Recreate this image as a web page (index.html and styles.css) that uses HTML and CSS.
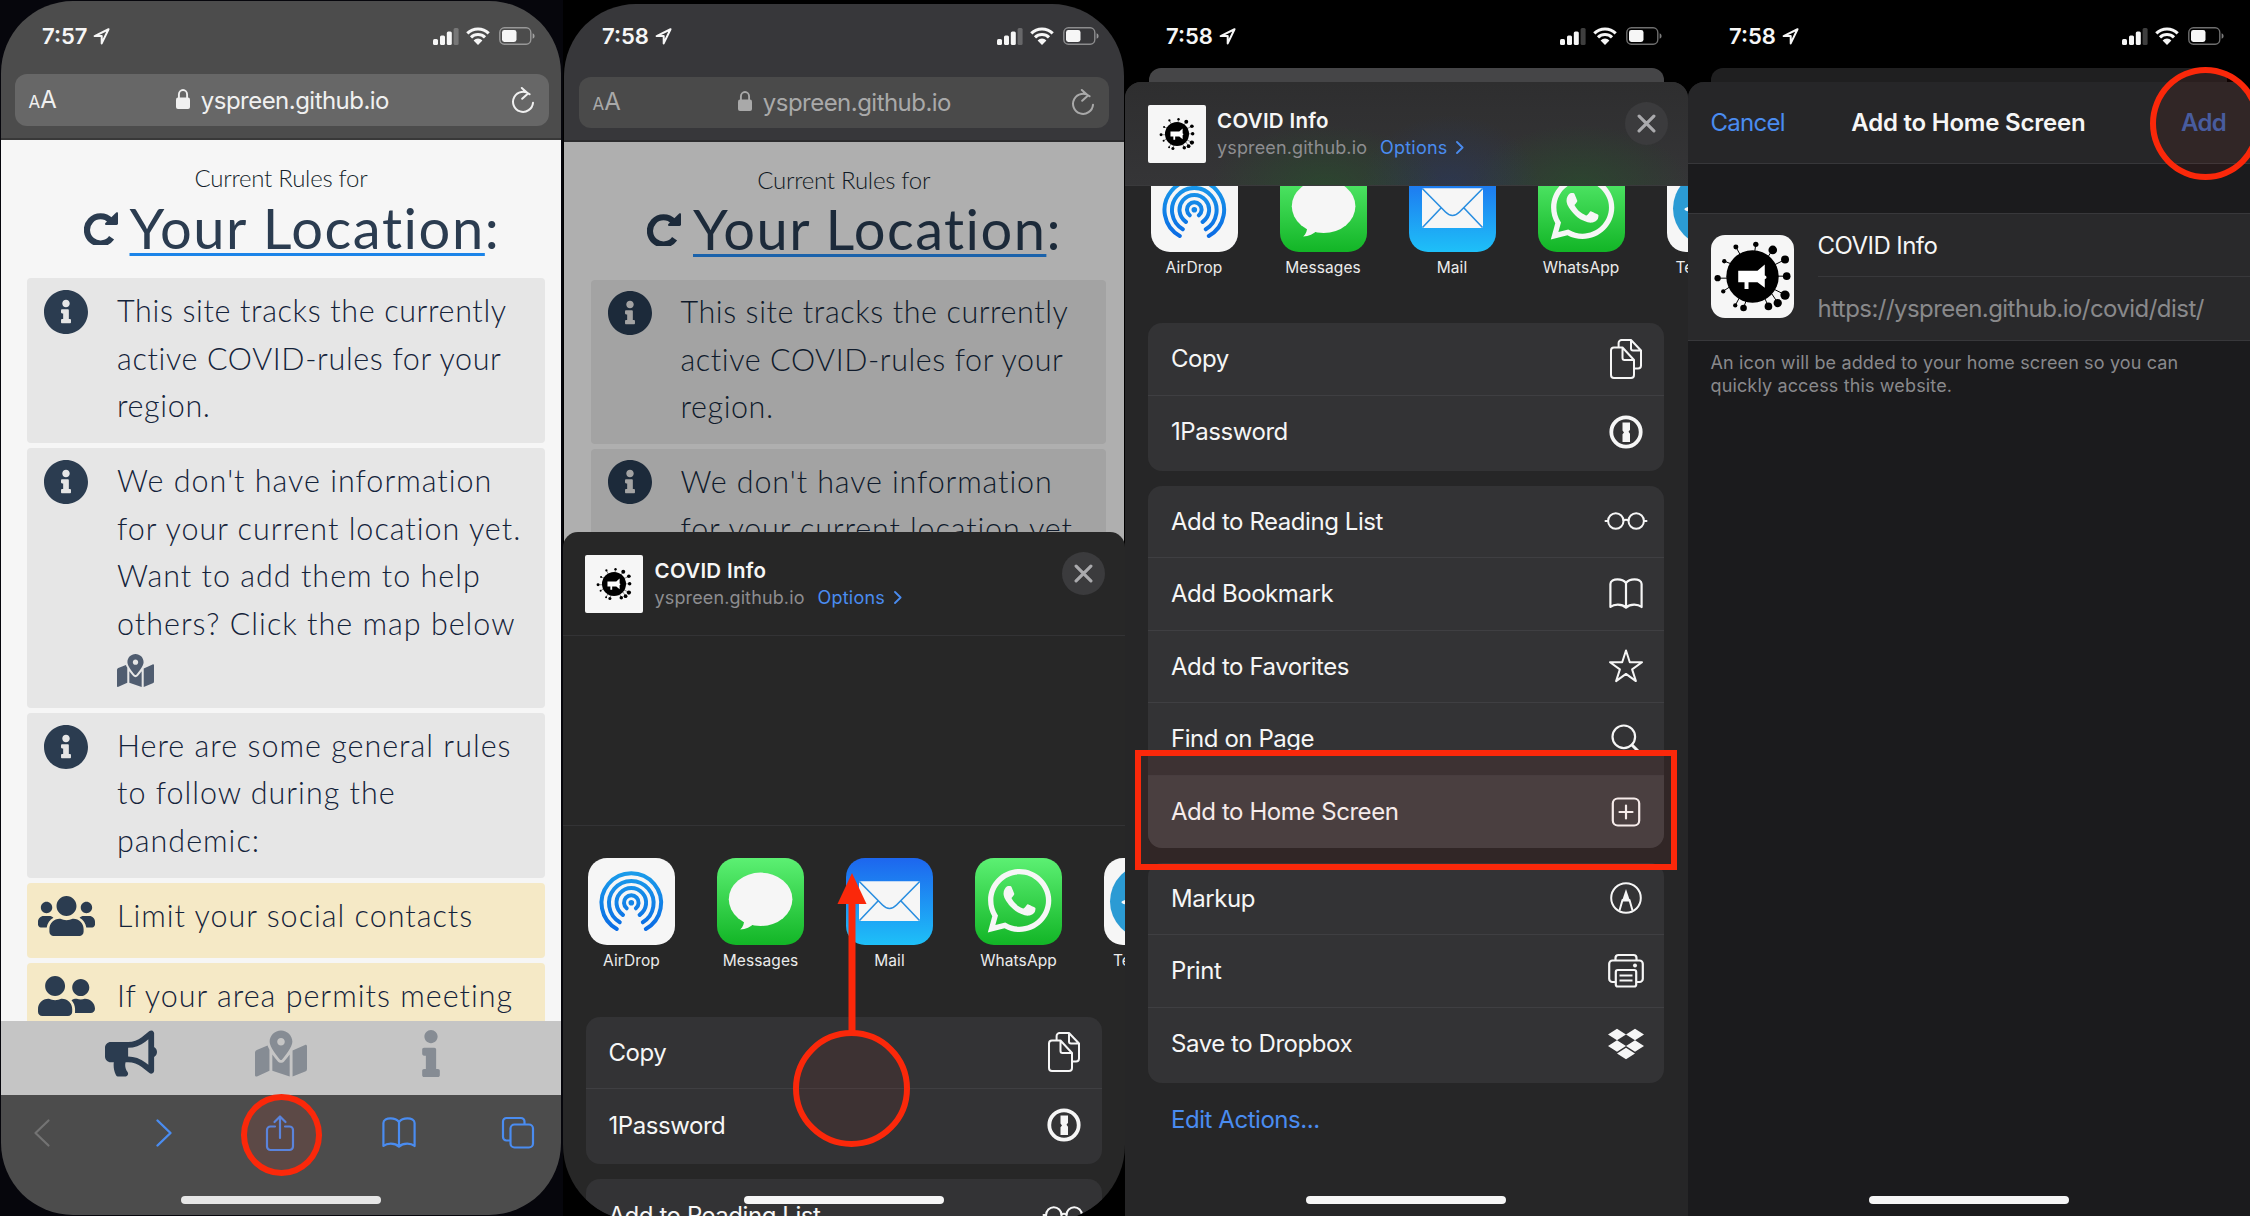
FILE: index.html
```
<!DOCTYPE html>
<html lang="en">
<head>
<meta charset="utf-8">
<title>COVID Info – Add to Home Screen</title>
<link rel="stylesheet" href="styles.css">
</head>
<body>
<svg class="defs" aria-hidden="true">
  <defs>
    <linearGradient id="g-blue" x1="0" y1="0" x2="0" y2="1"><stop offset="0" stop-color="#1a9bea"/><stop offset="1" stop-color="#0b6ce4"/></linearGradient>
    <symbol id="i-location" viewBox="0 0 16 16"><path d="M14.600 1.200 1.500 7.600h6.700v6.900z" fill="none" stroke="currentColor" stroke-width="1.900" stroke-linejoin="round"/></symbol>
    <symbol id="i-signal" viewBox="0 0 26 17"><rect x="0" y="11" width="5" height="6" rx="1.5"/><rect x="7" y="7.5" width="5" height="9.5" rx="1.5"/><rect x="13.8" y="3.5" width="5" height="13.5" rx="1.5"/><rect x="20.6" y="0" width="5" height="17" rx="1.5" opacity=".25"/></symbol>
    <symbol id="i-wifi" viewBox="0 0 24 18"><path d="M1.3 6.3a15.3 15.3 0 0 1 21.4 0M5 10.4a10 10 0 0 1 14 0" fill="none" stroke="currentColor" stroke-width="3.1"/><path d="M12 18 7.6 13.4a6.3 6.3 0 0 1 8.8 0z"/></symbol>
    <symbol id="i-battery" viewBox="0 0 36 18"><rect x=".8" y=".8" width="31" height="16.4" rx="4.6" fill="none" stroke="currentColor" stroke-width="1.4" opacity=".45"/><rect x="3" y="3" width="14.5" height="12" rx="2.4"/><path d="M33.6 6.2c2.6.8 2.6 4.800 0 5.600z" opacity=".5"/></symbol>
    <symbol id="i-lock" viewBox="0 0 14 20"><rect x="0" y="8.600" width="14" height="11.400" rx="2"/><path d="M2.900 9V5.400a4.100 4.400 0 0 1 8.200 0V9" fill="none" stroke="currentColor" stroke-width="1.900"/></symbol>
    <symbol id="i-reload" viewBox="0 0 24 27"><path d="M18.600 7.300A10 10 0 1 0 22 15.800M10.800 1l6.200 5.400-5.800 5.400" fill="none" stroke="currentColor" stroke-width="2" stroke-linecap="round" stroke-linejoin="round"/></symbol>
    <symbol id="i-redo" viewBox="0 0 34 34"><path d="M26.500 9.600A13.600 13.600 0 1 0 27.600 26.800" fill="none" stroke="currentColor" stroke-width="6.200"/><path d="M32.200 1.600c1-.9 1.800-.3 1.800.8v10.200c0 .8-.6 1.400-1.400 1.400H22.300c-1.200 0-1.700-1.300-.9-2.100z"/></symbol>
    <symbol id="i-info-circle" viewBox="8 8 496 496"><path d="M256 8C119.043 8 8 119.083 8 256c0 136.997 111.043 248 248 248s248-111.003 248-248C504 119.083 392.957 8 256 8zm0 110c23.196 0 42 18.804 42 42s-18.804 42-42 42-42-18.804-42-42 18.804-42 42-42zm56 254c0 6.627-5.373 12-12 12h-88c-6.627 0-12-5.373-12-12v-24c0-6.627 5.373-12 12-12h12v-64h-12c-6.627 0-12-5.373-12-12v-24c0-6.627 5.373-12 12-12h64c6.627 0 12 5.373 12 12v100h12c6.627 0 12 5.373 12 12v24z"/></symbol>
    <symbol id="i-map" viewBox="0 0 576 512"><path d="M288 0c-69.590 0-126 56.410-126 126 0 56.260 82.350 158.800 113.900 196.020 6.390 7.540 17.820 7.540 24.200 0C331.650 284.800 414 182.260 414 126 414 56.410 357.590 0 288 0zm0 168c-23.200 0-42-18.800-42-42s18.800-42 42-42 42 18.800 42 42-18.800 42-42 42zM20.120 215.950A32.006 32.006 0 0 0 0 245.660v250.320c0 11.320 11.430 19.060 21.940 14.860L160 448V214.920c-8.840-15.980-16.070-31.540-21.250-46.420L20.120 215.950zM288 359.670c-14.070 0-27.380-6.180-36.510-16.960-19.660-23.200-40.570-49.620-59.490-76.720v182l192 64V266c-18.920 27.090-39.820 53.520-59.490 76.720-9.130 10.770-22.440 16.950-36.510 16.950zm266.060-198.510L416 224v288l139.880-55.950A31.996 31.996 0 0 0 576 426.340V176.020c0-11.320-11.430-19.060-21.940-14.860z"/></symbol>
    <symbol id="i-info" viewBox="0 0 192 512"><path d="M20 424.229h20V279.771H20c-11.046 0-20-8.954-20-20V212c0-11.046 8.954-20 20-20h112c11.046 0 20 8.954 20 20v212.229h20c11.046 0 20 8.954 20 20V492c0 11.046-8.954 20-20 20H20c-11.046 0-20-8.954-20-20v-47.771c0-11.046 8.954-20 20-20zM96 0C56.235 0 24 32.235 24 72s32.235 72 72 72 72-32.235 72-72S135.764 0 96 0z"/></symbol>
    <symbol id="i-bullhorn" viewBox="0 0 576 512"><path d="M576 240c0-23.630-12.950-44.040-32-55.120V32.010C544 23.260 537.020 0 512 0c-7.120 0-14.190 2.380-19.980 7.020l-85.030 68.030C364.280 109.190 310.660 128 256 128H64c-35.350 0-64 28.650-64 64v96c0 35.350 28.650 64 64 64h33.700c-1.390 10.480-2.180 21.140-2.180 32 0 39.770 9.260 77.350 25.560 110.940 5.190 10.690 16.520 17.060 28.400 17.060h74.280c26.050 0 41.690-29.840 25.900-50.560-16.400-21.520-26.150-48.360-26.150-77.440 0-11.110 1.620-21.790 4.410-32H256c54.660 0 108.280 18.810 150.980 52.950l85.030 68.030a32.023 32.023 0 0 0 19.980 7.020c24.920 0 32-22.780 32-32V295.130C563.050 284.040 576 263.630 576 240zm-96 141.420l-33.050-26.440C392.950 311.780 325.120 288 256 288v-96c69.120 0 136.950-23.780 190.950-66.980L480 98.580v282.840z"/></symbol>
    <symbol id="i-users" viewBox="0 0 640 512"><path d="M96 224c35.300 0 64-28.700 64-64s-28.700-64-64-64-64 28.700-64 64 28.700 64 64 64zm448 0c35.300 0 64-28.700 64-64s-28.700-64-64-64-64 28.700-64 64 28.700 64 64 64zm32 32h-64c-17.600 0-33.500 7.100-45.100 18.600 40.300 22.100 68.900 62 75.100 109.400h66c17.700 0 32-14.300 32-32v-32c0-35.300-28.700-64-64-64zm-256 0c61.900 0 112-50.100 112-112S381.900 32 320 32 208 82.100 208 144s50.100 112 112 112zm76.800 32h-8.300c-20.800 10-43.900 16-68.500 16s-47.600-6-68.500-16h-8.300C179.600 288 128 339.600 128 403.200V432c0 26.500 21.500 48 48 48h288c26.500 0 48-21.500 48-48v-28.800c0-63.600-51.600-115.200-115.200-115.200zm-223.700-13.400C161.500 263.100 145.600 256 128 256H64c-35.300 0-64 28.700-64 64v32c0 17.700 14.300 32 32 32h65.900c6.300-47.400 34.900-87.300 75.200-109.400z"/></symbol>
    <symbol id="i-friends" viewBox="0 0 640 512"><path d="M192 256c61.900 0 112-50.100 112-112S253.900 32 192 32 80 82.100 80 144s50.100 112 112 112zm76.800 32h-8.300c-20.800 10-43.900 16-68.500 16s-47.600-6-68.500-16h-8.300C51.600 288 0 339.600 0 403.200V432c0 26.500 21.500 48 48 48h288c26.500 0 48-21.500 48-48v-28.800c0-63.600-51.600-115.200-115.200-115.200zM480 256c53 0 96-43 96-96s-43-96-96-96-96 43-96 96 43 96 96 96zm48 32h-3.800c-13.900 4.800-28.600 8-44.200 8s-30.300-3.200-44.200-8H432c-20.400 0-39.200 5.900-55.700 15.400 24.400 26.300 39.700 61.200 39.700 99.800v38.400c0 2.200-.5 4.300-.6 6.400H592c26.500 0 48-21.500 48-48 0-61.900-50.100-112-112-112z"/></symbol>
    <symbol id="i-back" viewBox="0 0 44 44"><path d="M28.500 9.500 15.500 22l13 12.500" fill="none" stroke="currentColor" stroke-width="2.200" stroke-linecap="round" stroke-linejoin="round"/></symbol>
    <symbol id="i-forward" viewBox="0 0 44 44"><path d="M15.500 9.500 28.500 22l-13 12.500" fill="none" stroke="currentColor" stroke-width="2.400" stroke-linecap="round" stroke-linejoin="round"/></symbol>
    <symbol id="i-share" viewBox="0 0 44 44"><path d="M17 15.500h-4.500a3.500 3.500 0 0 0-3.500 3.500v16.500a3.500 3.500 0 0 0 3.500 3.500h19a3.500 3.500 0 0 0 3.500-3.500V19a3.500 3.500 0 0 0-3.500-3.500H27M22 27V6M16.500 11 22 5.500l5.500 5.500" fill="none" stroke="currentColor" stroke-width="2.200" stroke-linecap="round" stroke-linejoin="round"/></symbol>
    <symbol id="i-book" viewBox="0 0 44 44"><path d="M22 11c-2-2.600-5-3.600-8.500-3.600S6.400 9 6.400 12v23c2-1.700 4.600-2.400 7.400-2.400 3.200 0 6.200 1 8.200 3 2-2 5-3 8.200-3 2.800 0 5.400.7 7.400 2.400V12c0-3-3.600-4.600-7.100-4.600S24 8.400 22 11zV35" fill="none" stroke="currentColor" stroke-width="2.200" stroke-linejoin="round"/></symbol>
    <symbol id="i-tabs" viewBox="0 0 44 44"><rect x="14.500" y="13.500" width="22.500" height="23" rx="4" fill="none" stroke="currentColor" stroke-width="2.200"/><path d="M14 29.500h-3.500a3.500 3.500 0 0 1-3.500-3.500V10.500A3.500 3.500 0 0 1 10.500 7H25a3.500 3.500 0 0 1 3.500 3.500v3" fill="none" stroke="currentColor" stroke-width="2.200"/></symbol>
    <symbol id="i-close" viewBox="0 0 18 18"><path d="M2 2l14 14M16 2 2 16" fill="none" stroke="currentColor" stroke-width="3" stroke-linecap="round"/></symbol>
    <symbol id="i-chevron" viewBox="0 0 8 13"><path d="M1 1l5.600 5.500L1 12" fill="none" stroke="currentColor" stroke-width="1.800" stroke-linecap="round" stroke-linejoin="round"/></symbol>
    <symbol id="i-copy" viewBox="0 0 44 44"><g fill="none" stroke="currentColor" stroke-width="2" stroke-linejoin="round"><path d="M30 31.500h4a3 3 0 0 0 3-3V13.500L27 3H17.600a3 3 0 0 0-3 3v4.500M27 3v8.500a2 2 0 0 0 2 2h8"/><path d="M7 13.500a3 3 0 0 1 3-3h8.500L30 23v15a3 3 0 0 1-3 3H10a3 3 0 0 1-3-3zM18.500 10.500v10.500a2 2 0 0 0 2 2H30"/></g></symbol>
    <symbol id="i-1password" viewBox="0 0 44 44"><circle cx="22" cy="22" r="14.700" fill="none" stroke="currentColor" stroke-width="3.800"/><path d="M18.500 12.500h7.500v7.300l-1.500 2 1.500 2v8.200h-7.500v-7.800l1.500-1.800-1.500-1.800z"/></symbol>
    <symbol id="i-glasses" viewBox="0 0 44 44"><g fill="none" stroke="currentColor" stroke-width="2" stroke-linecap="round"><circle cx="11.800" cy="22" r="7.700"/><circle cx="32.200" cy="22" r="7.700"/><path d="M19.500 21.300c1.500-.8 3.500-.8 5 0M1.500 22h2.500M40 22h2.500"/></g></symbol>
    <symbol id="i-star" viewBox="0 0 44 44"><path d="M22 6.500l3.800 11.700h12.200l-9.900 7.200 3.800 11.700-9.900-7.200-9.900 7.200 3.800-11.700-9.900-7.200h12.200z" fill="none" stroke="currentColor" stroke-width="2" stroke-linejoin="round"/></symbol>
    <symbol id="i-search" viewBox="0 0 44 44"><circle cx="19.800" cy="19.800" r="11.300" fill="none" stroke="currentColor" stroke-width="2.200"/><path d="M28 28l7.500 7.500" stroke="currentColor" stroke-width="3" stroke-linecap="round"/></symbol>
    <symbol id="i-plus" viewBox="0 0 44 44"><rect x="8.800" y="8.500" width="26.400" height="27" rx="5" fill="none" stroke="currentColor" stroke-width="2.200"/><path d="M22 15.500v13M15.500 22h13" stroke="currentColor" stroke-width="2.200" stroke-linecap="round"/></symbol>
    <symbol id="i-markup" viewBox="0 0 44 44"><g fill="none" stroke="currentColor" stroke-width="2"><circle cx="22" cy="22" r="14.800"/><path d="M15.500 34.500l3-10.500h7l3 10.500" stroke-linejoin="round"/></g><path d="M22 13l4.200 12.500h-8.400z"/></symbol>
    <symbol id="i-print" viewBox="0 0 44 44"><g fill="none" stroke="currentColor" stroke-width="2.200" stroke-linejoin="round"><path d="M12 33H8.500A3.300 3.300 0 0 1 5.200 29.700V14.800A3.300 3.300 0 0 1 8.500 11.500h27a3.300 3.300 0 0 1 3.300 3.300v14.900A3.300 3.300 0 0 1 35.500 33H32"/><path d="M11.500 11.500V9a3 3 0 0 1 3-3h15a3 3 0 0 1 3 3v2.500"/><rect x="11.800" y="21" width="20.400" height="16.500" rx="2"/><path d="M15.500 26.500h13M15.500 31.500h13" stroke-width="2"/></g><circle cx="31" cy="16.500" r="2"/></symbol>
    <symbol id="i-dropbox" viewBox="0 0 44 44"><path d="M13 6.800l9 5.700-9 5.700-9-5.700zM31 6.800l9 5.700-9 5.700-9-5.700zM13 18.300l9 5.700-9 5.700L4 24zM31 18.300l9 5.700-9 5.700-9-5.700zM22 25.800l9 5.700-9 5.700-9-5.700z"/></symbol>
    <symbol id="i-virus" viewBox="17 14 250 250">
      <g stroke="#000" stroke-width="3"><path d="M92 50l20 36M152 42l-6 40M202 58l-30 50M240 88l-60 30M245 138h-60M57 93l40 15M37 144h50M54 183l40-26M90 226l25-46M115 233l15-40M190 229l-20-44M218 218l-40-60M240 194l-60-30"/></g>
      <circle cx="142" cy="139" r="79"/>
      <circle cx="92" cy="50" r="7.500"/><circle cx="152" cy="42" r="8"/><circle cx="203" cy="59" r="13"/><circle cx="240" cy="88" r="12"/><circle cx="245" cy="138" r="11.500"/><circle cx="240" cy="195" r="14"/><circle cx="218" cy="219" r="12.500"/><circle cx="190" cy="229" r="11.500"/><circle cx="115" cy="234" r="10"/><circle cx="90" cy="226" r="6.500"/><circle cx="54" cy="184" r="6.500"/><circle cx="37" cy="144" r="9.500"/><circle cx="57" cy="93" r="6.500"/>
      <path d="M99 122h58l22-19v33c7 2 7 9 0 11v26l-22-17h-27v21h-12v-21H99z" fill="#fff"/>
    </symbol>
    <symbol id="a-airdrop" viewBox="0 0 87 87"><g fill="none" stroke="url(#g-blue)" stroke-width="4" stroke-linecap="round"><path d="M28.800 71a29.800 29.800 0 1 1 29 0M31.800 64.300a22.300 22.300 0 1 1 23 0M35 57a14.800 14.800 0 1 1 16.600 0M38.700 50.300a7.300 7.300 0 1 1 9.200 0"/></g><circle cx="43.300" cy="44.700" r="2.800" fill="#1285e8"/></symbol>
    <symbol id="a-messages" viewBox="0 0 87 87"><ellipse cx="43.600" cy="41.300" rx="31.800" ry="26.700" fill="#f6f6f6"/><path d="M27 61c.5 4.500-1 8-3.800 10.600 5.500-.4 10.500-2.400 14.300-6.600z" fill="#f6f6f6"/></symbol>
    <symbol id="a-mail" viewBox="0 0 87 87"><rect x="13" y="23.300" width="61" height="39.700" rx="1.500" fill="#f6f6f6"/><path d="M13.500 23.800l23 23.200c4.500 4.600 9.500 4.600 14 0l23-23.200M13.500 62.500l18.500-19.500M73.500 62.500L55 43" fill="none" stroke="#2a8ee0" stroke-width="1.600"/></symbol>
    <symbol id="a-whatsapp" viewBox="0 0 87 87"><path transform="translate(12.800 6.500) scale(.1417)" fill="#f6f6f6" d="M380.900 97.100C339 55.100 283.200 32 223.900 32c-122.400 0-222 99.600-222 222 0 39.100 10.200 77.300 29.600 111L0 480l117.700-30.900c32.400 17.700 68.900 27 106.100 27h.1c122.300 0 224.100-99.600 224.100-222 0-59.300-25.200-115-67.100-157zm-157 341.600c-33.200 0-65.700-8.900-94-25.700l-6.700-4-69.800 18.300L72 359.200l-4.400-7c-18.500-29.400-28.200-63.300-28.200-98.200 0-101.700 82.800-184.500 184.600-184.500 49.300 0 95.600 19.200 130.400 54.100 34.800 34.900 56.200 81.200 56.100 130.500 0 101.800-84.900 184.600-186.600 184.600zm101.200-138.200c-5.500-2.800-32.800-16.200-37.900-18-5.100-1.900-8.800-2.800-12.500 2.800-3.700 5.600-14.300 18-17.600 21.800-3.200 3.700-6.500 4.200-12 1.400-32.600-16.300-54-29.100-75.500-66-5.700-9.800 5.700-9.100 16.300-30.300 1.800-3.700.9-6.900-.5-9.700-1.400-2.800-12.500-30.100-17.100-41.200-4.500-10.800-9.100-9.300-12.500-9.500-3.200-.2-6.900-.2-10.600-.2-3.700 0-9.700 1.400-14.800 6.900-5.100 5.600-19.400 19-19.400 46.300 0 27.300 19.900 53.700 22.600 57.400 2.800 3.700 39.100 59.700 94.800 83.800 35.200 15.200 49 16.500 66.600 13.900 10.700-1.600 32.800-13.400 37.400-26.400 4.600-13 4.600-24.100 3.200-26.400-1.300-2.500-5-3.900-10.500-6.600z"/></symbol>
    <symbol id="a-telegram" viewBox="0 0 87 87"><circle cx="43.500" cy="43.500" r="37.500" fill="#2b9bd4"/><path d="M18.500 43l44-18c2-.7 3.800.5 3.100 3.800l-7.500 35c-.5 2.500-2 3-4.100 2L42.600 57.500l-5.600 5.400c-1.500 1.200-2 0-2.300-1.300L31 49.500l-11.500-3.600c-2.500-.8-2.500-2-1-2.900z" fill="#f6f6f6"/></symbol>
  </defs>
</svg>

<main class="board">

  <!-- Step 1: open the share menu -->
  <section class="phone phone-browser">
    <div class="screen">
      <header class="browser-head">
        <div class="status"><span class="time">7:57</span><svg class="loc"><use href="#i-location"/></svg><span class="spacer"></span><svg class="signal"><use href="#i-signal"/></svg><svg class="wifi"><use href="#i-wifi"/></svg><svg class="battery"><use href="#i-battery"/></svg></div>
        <div class="urlbar"><span class="aa"><small>A</small>A</span><span class="host"><svg class="lock"><use href="#i-lock"/></svg>yspreen.github.io</span><svg class="reload"><use href="#i-reload"/></svg></div>
      </header>
      <div class="page">
        <p class="kicker">Current Rules for</p>
        <h1 class="place"><svg class="redo"><use href="#i-redo"/></svg><span><u>Your Location</u>:</span></h1>
        <ul class="cards">
          <li class="card"><svg class="ic"><use href="#i-info-circle"/></svg><p class="narrow">This site tracks the currently<br>active COVID-rules for your<br>region.</p></li>
          <li class="card tall"><svg class="ic"><use href="#i-info-circle"/></svg><p>We don't have information<br>for your current location yet.<br>Want to add them to help<br>others? Click the map below<br><svg class="inline-map"><use href="#i-map"/></svg></p></li>
          <li class="card"><svg class="ic"><use href="#i-info-circle"/></svg><p>Here are some general rules<br>to follow during the<br>pandemic:</p></li>
          <li class="card warn"><svg class="ic wide"><use href="#i-users"/></svg><p>Limit your social contacts</p></li>
          <li class="card warn"><svg class="ic wide"><use href="#i-friends"/></svg><p>If your area permits meeting</p></li>
        </ul>
      </div>
      <nav class="sitenav"><svg class="n-horn"><use href="#i-bullhorn"/></svg><svg class="n-map"><use href="#i-map"/></svg><svg class="n-info"><use href="#i-info"/></svg></nav>
      <footer class="toolbar"><svg class="off"><use href="#i-back"/></svg><svg class="fwd"><use href="#i-forward"/></svg><svg><use href="#i-share"/></svg><svg><use href="#i-book"/></svg><svg><use href="#i-tabs"/></svg></footer>
    </div>
    <span class="home"></span>
    <span class="ring ring-share"></span>
  </section>

  <!-- Step 2: scroll the share sheet -->
  <section class="phone phone-share">
    <div class="screen dimmed">
      <header class="browser-head">
        <div class="status"><span class="time">7:58</span><svg class="loc"><use href="#i-location"/></svg><span class="spacer"></span><svg class="signal"><use href="#i-signal"/></svg><svg class="wifi"><use href="#i-wifi"/></svg><svg class="battery"><use href="#i-battery"/></svg></div>
        <div class="urlbar"><span class="aa"><small>A</small>A</span><span class="host"><svg class="lock"><use href="#i-lock"/></svg>yspreen.github.io</span><svg class="reload"><use href="#i-reload"/></svg></div>
      </header>
      <div class="page">
        <p class="kicker">Current Rules for</p>
        <h1 class="place"><svg class="redo"><use href="#i-redo"/></svg><span><u>Your Location</u>:</span></h1>
        <ul class="cards">
          <li class="card"><svg class="ic"><use href="#i-info-circle"/></svg><p class="narrow">This site tracks the currently<br>active COVID-rules for your<br>region.</p></li>
          <li class="card"><svg class="ic"><use href="#i-info-circle"/></svg><p>We don't have information<br>for your current location yet.</p></li>
        </ul>
      </div>
    </div>
    <div class="sheet">
      <header class="sheet-head"><span class="thumb"><svg><use href="#i-virus"/></svg></span><div class="meta"><strong>COVID Info</strong><p>yspreen.github.io<a>Options<svg><use href="#i-chevron"/></svg></a></p></div><span class="close"><svg><use href="#i-close"/></svg></span></header>
      <div class="people"></div>
      <div class="apps">
        <div class="app"><svg class="t-white"><use href="#a-airdrop"/></svg><span>AirDrop</span></div>
        <div class="app"><svg class="t-green"><use href="#a-messages"/></svg><span>Messages</span></div>
        <div class="app"><svg class="t-blue"><use href="#a-mail"/></svg><span>Mail</span></div>
        <div class="app"><svg class="t-green"><use href="#a-whatsapp"/></svg><span>WhatsApp</span></div>
        <div class="app"><svg class="t-white"><use href="#a-telegram"/></svg><span>Telegram</span></div>
      </div>
      <ul class="actions">
        <li>Copy<svg><use href="#i-copy"/></svg></li>
        <li>1Password<svg><use href="#i-1password"/></svg></li>
      </ul>
      <ul class="actions">
        <li>Add to Reading List<svg><use href="#i-glasses"/></svg></li>
      </ul>
    </div>
    <span class="home"></span>
    <span class="ring ring-swipe"></span>
    <svg class="swipe" viewBox="0 0 30 160"><path d="M15 0l14.500 31H.5z"/><path d="M11.500 28h7v132h-7z"/></svg>
  </section>

  <!-- Step 3: choose the action -->
  <section class="phone phone-actions">
    <div class="status"><span class="time">7:58</span><svg class="loc"><use href="#i-location"/></svg><span class="spacer"></span><svg class="signal"><use href="#i-signal"/></svg><svg class="wifi"><use href="#i-wifi"/></svg><svg class="battery"><use href="#i-battery"/></svg></div>
    <div class="behind"></div>
    <div class="sheet">
      <header class="sheet-head glow"><span class="thumb"><svg><use href="#i-virus"/></svg></span><div class="meta"><strong>COVID Info</strong><p>yspreen.github.io<a>Options<svg><use href="#i-chevron"/></svg></a></p></div><span class="close"><svg><use href="#i-close"/></svg></span></header>
      <div class="apps scrolled">
        <div class="app"><svg class="t-white"><use href="#a-airdrop"/></svg><span>AirDrop</span></div>
        <div class="app"><svg class="t-green"><use href="#a-messages"/></svg><span>Messages</span></div>
        <div class="app"><svg class="t-blue"><use href="#a-mail"/></svg><span>Mail</span></div>
        <div class="app"><svg class="t-green"><use href="#a-whatsapp"/></svg><span>WhatsApp</span></div>
        <div class="app"><svg class="t-white"><use href="#a-telegram"/></svg><span>Telegram</span></div>
      </div>
      <ul class="actions">
        <li>Copy<svg><use href="#i-copy"/></svg></li>
        <li>1Password<svg><use href="#i-1password"/></svg></li>
      </ul>
      <ul class="actions tight">
        <li>Add to Reading List<svg><use href="#i-glasses"/></svg></li>
        <li>Add Bookmark<svg><use href="#i-book"/></svg></li>
        <li>Add to Favorites<svg><use href="#i-star"/></svg></li>
        <li>Find on Page<svg><use href="#i-search"/></svg></li>
        <li class="pressed">Add to Home Screen<svg><use href="#i-plus"/></svg></li>
      </ul>
      <ul class="actions">
        <li>Markup<svg><use href="#i-markup"/></svg></li>
        <li>Print<svg><use href="#i-print"/></svg></li>
        <li>Save to Dropbox<svg><use href="#i-dropbox"/></svg></li>
      </ul>
      <a class="edit">Edit Actions...</a>
    </div>
    <span class="home"></span>
    <span class="frame"></span>
  </section>

  <!-- Step 4: confirm -->
  <section class="phone phone-add">
    <div class="status"><span class="time">7:58</span><svg class="loc"><use href="#i-location"/></svg><span class="spacer"></span><svg class="signal"><use href="#i-signal"/></svg><svg class="wifi"><use href="#i-wifi"/></svg><svg class="battery"><use href="#i-battery"/></svg></div>
    <div class="behind"></div>
    <div class="sheet">
      <header class="dialog-head"><a>Cancel</a><strong>Add to Home Screen</strong><a class="add">Add</a></header>
      <div class="entry">
        <svg class="appicon"><use href="#i-virus"/></svg>
        <div class="fields"><p class="name">COVID Info</p><p class="url">https://yspreen.github.io/covid/dist/</p></div>
      </div>
      <p class="note">An icon will be added to your home screen so you can<br>quickly access this website.</p>
    </div>
    <span class="home"></span>
    <span class="ring ring-add"></span>
  </section>
</main>
</body>
</html>
```
FILE: styles.css
```
* { box-sizing: border-box; margin: 0; padding: 0; }
body { width: 2250px; height: 1216px; overflow: hidden; background: #06060c; font-family: Inter, "Liberation Sans", sans-serif; }
.defs { position: absolute; width: 0; height: 0; }
svg { display: block; flex: none; fill: currentColor; }
ul { list-style: none; }

.board { display: grid; grid-template-columns: repeat(4, 562.5px); height: 1216px; }
.phone { position: relative; display: flex; flex-direction: column; height: 1216px; overflow: hidden; color: #f6f6f6; }

/* status bar */
.status { display: flex; align-items: center; height: 72px; padding: 0 27px 0 41px; color: #f6f6f6; }
.time { font-size: 22px; font-weight: 600; line-height: 30px; }
.loc { width: 17px; height: 17px; margin-left: 6px; }
.spacer { flex: 1; }
.signal { width: 26px; height: 17px; }
.wifi { width: 24px; height: 18px; margin: 0 9px 0 7px; }
.battery { width: 36px; height: 18px; }

/* browser chrome */
.screen { display: flex; flex-direction: column; overflow: hidden; background: #4c4c4c; }
.phone-browser .screen { height: 1214px; margin: 1px 1.500px 0 1px; border-radius: 72px; }
.browser-head { flex: none; height: 139px; color: #f0f0f0; border-bottom: 2px solid #383838; }
.browser-head .status { height: 70px; padding-left: 41px; padding-right: 26px; }
.urlbar { position: relative; display: flex; align-items: center; justify-content: space-between; height: 52px; margin: 3px 12.500px 0 13.500px; padding: 0 13.500px 0 14px; border-radius: 12px; background: #676767; }
.aa { padding-top: 1px; font-size: 24px; line-height: 30px; }
.aa small { font-size: 17px; }
.host { display: flex; align-items: center; gap: 11px; margin-left: -3px; font-size: 24px; letter-spacing: -.53px; }
.lock { width: 14px; height: 20px; margin-top: -2px; }
.reload { width: 24px; height: 27px; }

/* site */
.page { flex: 1; min-height: 0; overflow: hidden; background: #f6f6f6; color: #14233a; font-family: Lato, sans-serif; }
.kicker { margin-top: 22px; height: 33.500px; line-height: 32px; font-size: 24px; letter-spacing: -.25px; text-align: center; font-weight: 300; color: #141f2c; }
.place { display: flex; align-items: center; gap: 12px; height: 64px; padding-left: 82.500px; font-size: 56px; line-height: 64px; font-weight: 400; letter-spacing: 1.600px; color: #2b3c50; white-space: nowrap; }
.place u { text-decoration: underline; text-decoration-color: #1b84e8; text-decoration-thickness: 2.500px; text-underline-offset: 4px; text-decoration-skip-ink: none; }
.redo { width: 34px; height: 34px; }
.cards { display: flex; flex-direction: column; gap: 5px; padding: 18.500px 16px 0 26px; }
.card { display: flex; min-height: 75px; padding: 9px 0 13.500px; border-radius: 4px; background: #e6e6e6; }
.card.tall { height: 259.500px; }
.card p { font-size: 30.500px; line-height: 47.500px; font-weight: 300; letter-spacing: 1px; white-space: nowrap; }
.card p.narrow { letter-spacing: .64px; }
.card.warn { background: #f5e9c6; }
.ic { width: 44px; height: 44px; margin: 3px 29px 0 17px; color: #2b3c50; }
.ic.wide { width: 57px; height: 46px; margin: 1px 22.500px 0 10.500px; }
.inline-map { width: 37px; height: 33px; margin-top: 7px; color: #505d70; }
.sitenav { display: flex; align-items: flex-start; flex: none; height: 74px; padding: 9px 0 0 104px; background: #c5c5c5; color: #868c94; }
.n-horn { width: 52px; height: 47px; color: #2b3c50; }
.n-map { width: 52px; height: 47px; margin-left: 98px; }
.n-info { width: 18px; height: 47px; margin-left: 115px; }
.toolbar { display: flex; justify-content: space-between; flex: none; height: 120px; padding: 16px 21px 0 19px; color: #4a8cf0; }
.toolbar svg { width: 44px; height: 44px; }
.toolbar .off { color: #737373; }
.toolbar .fwd { margin: 0 -2.500px 0 2.500px; }

/* dimmed browser behind the share sheet */
.phone-share { background: #000; }
.screen.dimmed { flex: none; height: 543px; margin: 4px 1.500px 0; border-radius: 72px 72px 0 0; background: #37373a; }
.dimmed .browser-head { height: 138px; border-color: #2c2c2e; color: #a9a9a9; }
.dimmed .status { height: 64px; padding: 0 25px 0 38px; }
.dimmed .urlbar { height: 51.500px; margin: 8.500px 15px 0 14.500px; background: #4a4a4a; }
.dimmed .page { background: #afafaf; color: #0f1a2b; }
.dimmed .kicker { margin-top: 21.500px; color: #111923; }
.dimmed .place { padding-left: 83px; letter-spacing: 1.450px; color: #1c2a3a; }
.dimmed .place u { text-decoration-color: #1a62ab; }
.dimmed .cards { padding-left: 26.500px; padding-right: 17.500px; }
.dimmed .card { background: #a3a3a3; }
.dimmed .card p { margin-top: -.5px; letter-spacing: .87px; }
.dimmed .card p.narrow { letter-spacing: .58px; }
.dimmed .ic { color: #1c2a3a; margin-top: 2px; }

/* share sheet */
.sheet { flex: 1; min-height: 0; display: flex; flex-direction: column; overflow: hidden; border-radius: 16px 16px 0 0; background: #262627; }
.phone-share .sheet { flex: none; height: 689px; margin-top: -15px; border-radius: 15px 15px 76px 76px; z-index: 1; background: #272727; }
.sheet-head { display: flex; flex: none; height: 104px; padding: 23px 20px 0 22.500px; border-bottom: 1px solid #333335; }
.thumb { display: flex; align-items: center; justify-content: center; width: 58px; height: 58px; border-radius: 2px; background: #f6f6f6; color: #000; }
.thumb svg { width: 38px; height: 38px; }
.meta { flex: 1; margin-left: 11.500px; }
.meta strong { display: block; height: 27px; margin-top: 1.500px; line-height: 28px; font-size: 20.500px; font-weight: 600; letter-spacing: .3px; }
.meta p { display: flex; align-items: center; font-size: 18px; line-height: 28px; letter-spacing: .13px; color: #8d8d90; }
.meta a { display: flex; align-items: center; gap: 9px; margin-left: 13px; color: #4a8cf0; letter-spacing: .2px; }
.meta a svg { width: 8px; height: 13px; }
.close { display: flex; align-items: center; justify-content: center; width: 43px; height: 43px; margin-top: -3px; border-radius: 50%; background: #3b3b3d; color: #aaaaad; }
.close svg { width: 19px; height: 19px; }
.glow { border-color: #3a3a3c; background:
  radial-gradient(ellipse 115px 60px at 200px 100%, rgba(35, 85, 40, .5), transparent),
  radial-gradient(ellipse 90px 70px at 325px 100%, rgba(30, 60, 120, .35), transparent),
  radial-gradient(ellipse 110px 60px at 455px 100%, rgba(35, 85, 40, .5), transparent),
  linear-gradient(#2e2e2f, #353537); }
.people { flex: none; height: 190px; border-bottom: 1px solid #333335; }
.apps { display: flex; flex: none; height: 190.500px; padding: 31.500px 0 0 4.500px; overflow: hidden; }
.apps.scrolled { height: 137px; padding-top: 0; }
.apps.scrolled .app { margin-top: -21.500px; }
.app { display: flex; flex: none; flex-direction: column; align-items: center; width: 129px; }
.app svg { width: 87px; height: 87px; border-radius: 19px; }
.app span { margin-top: 6px; font-size: 15.500px; line-height: 20px; letter-spacing: .1px; color: #ececec; }
.t-white { background: #f6f6f6; }
.t-green { background: linear-gradient(#5cf073, #12b526); }
.t-blue { background: linear-gradient(#1d66ee, #1ec0f8); }

.actions { flex: none; margin: 0 23.500px 15px 23px; padding-bottom: 2.500px; overflow: hidden; border-radius: 14px; background: #333335; }
.actions.tight { padding-bottom: 0; margin-bottom: 14.500px; }
.actions li { display: flex; align-items: center; justify-content: space-between; height: 72.500px; padding: 0 16px 0 23px; font-size: 24px; letter-spacing: -.44px; border-bottom: 1px solid #3f3f42; }
.actions li:last-child { border-bottom: 0; }
.actions svg { width: 44px; height: 44px; }
.actions .pressed { background: #414143; }
.edit { margin: 6.500px 0 0 46px; line-height: 32px; font-size: 24px; letter-spacing: -.45px; color: #4a8cf0; }

/* steps 3 and 4: stacked cards on black */
.phone-actions, .phone-add { background: #000; }
.phone-actions .status, .phone-add .status { flex: none; height: 68px; padding-top: 4px; padding-right: 26px; }
.phone-add .status { padding-left: 41.500px; }
.behind { flex: none; height: 30px; margin: 0 23.500px -16px; border-radius: 12px 12px 0 0; background: #454547; }
.phone-add .behind { background: #1f1f20; }
.phone-add .sheet { z-index: 1; background: #1b1b1d; }
.phone-actions .sheet { z-index: 1; }

.dialog-head { display: flex; flex: none; align-items: center; justify-content: space-between; height: 82px; padding: 0 24px 0 23px; font-size: 24px; letter-spacing: -.75px; background: #262628; border-bottom: 1px solid #37373a; }
.dialog-head a { color: #4a8cf0; }
.dialog-head strong { margin-left: -29px; font-weight: 600; letter-spacing: -.22px; }
.dialog-head a.add { font-weight: 600; color: #3f5fa6; letter-spacing: -.7px; }
.entry { display: flex; flex: none; height: 128px; margin-top: 49px; padding-left: 23.500px; background: #29292b; border-top: 1px solid #38383b; border-bottom: 1px solid #38383b; }
.appicon { width: 83px; height: 83px; margin-top: 21px; border-radius: 14px; background: #f6f6f6; color: #000; }
.fields { flex: 1; margin-left: 23.500px; font-size: 24px; }
.fields p { height: 63px; line-height: 64px; letter-spacing: -.55px; }
.fields .name { border-bottom: 1px solid #38383b; }
.fields .url { color: #89898b; }
.note { margin: 9.500px 0 0 23px; font-size: 18px; line-height: 23.500px; letter-spacing: .14px; color: #89898c; white-space: nowrap; }

/* overlays */
.home { position: absolute; z-index: 2; left: 181px; top: 1196px; width: 200px; height: 8px; border-radius: 4px; background: #f6f6f6; }
.phone-browser .home { background: #e6e6e6; }
.ring { position: absolute; z-index: 3; border: 6.500px solid #fb280a; border-radius: 50%; background: rgba(251, 40, 10, .05); }
.ring-share { left: 240.500px; top: 1094px; width: 81.500px; height: 82px; background: rgba(251, 40, 10, .09); }
.ring-swipe { left: 230.500px; top: 1029.500px; width: 117px; height: 117px; }
.ring-add { left: 462px; top: 67px; width: 111px; height: 113px; }
.swipe { position: absolute; z-index: 3; left: 274px; top: 873px; width: 30px; height: 160px; color: #fb280a; }
.frame { position: absolute; z-index: 3; left: 10px; top: 750px; width: 542px; height: 120px; border: 6.500px solid #fb280a; background: rgba(251, 40, 10, .05); }
```
